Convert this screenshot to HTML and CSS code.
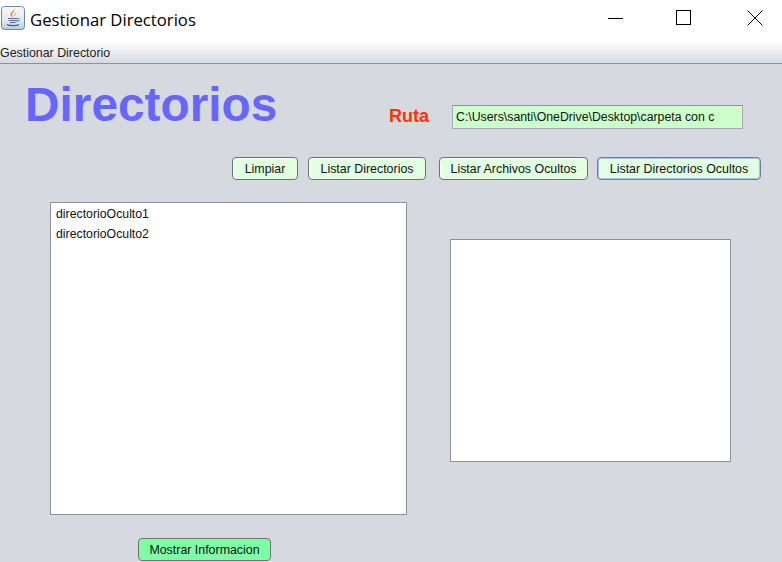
FILE: index.html
```html
<!DOCTYPE html>
<html lang="en">
<head>
    <meta charset="UTF-8">
    <meta name="viewport" content="width=device-width, initial-scale=1.0">
    <title>Gestionar Directorios</title>
    <link rel="stylesheet" href="styles.css">
</head>
<body>

    <div class="titlebar">
        <svg class="app-icon" width="24" height="24" viewBox="0 0 24 24">
            <defs>
                <linearGradient id="iconBg" x1="0" y1="0" x2="0" y2="1">
                    <stop offset="0" stop-color="#f4f6f8"/>
                    <stop offset="0.6" stop-color="#e4e9ee"/>
                    <stop offset="1" stop-color="#b9cbdc"/>
                </linearGradient>
            </defs>
            <rect x="0.500" y="0.500" width="23" height="23" rx="3" fill="url(#iconBg)" stroke="#6d8ba6"/>
            <path d="M13.500 3c1 2.500-3.500 3.500-2.500 6 .3.800.8 1.300 1 2-1.500-.6-3-2-2.400-3.600C10.200 5.800 13 5 13.500 3z" fill="#e8741a"/>
            <path d="M15 7c0 1.500-2 2-1.600 3.500-.8-1.300.2-2.600 1.600-3.500z" fill="#e8741a"/>
            <path d="M7 12.500h9.500M7.500 14.500h8.500M9 16.500h5.500" stroke="#4f6f8c" stroke-width="1.200"/>
            <path d="M16.500 12.500c2.500-.3 2.500 2.500-.8 3" fill="none" stroke="#4f6f8c"/>
            <path d="M6 18.500c2 1.500 10 1.500 12 0" fill="none" stroke="#3f6080" stroke-width="1.200"/>
        </svg>
        <span class="app-title">Gestionar Directorios</span>
        <div class="window-buttons">
            <svg width="16" height="16" viewBox="0 0 16 16"><path d="M0 8.500h15" stroke="#000"/></svg>
            <svg width="16" height="16" viewBox="0 0 16 16"><rect x="0.500" y="0.500" width="14" height="14" fill="none" stroke="#000"/></svg>
            <svg width="16" height="16" viewBox="0 0 16 16"><path d="M0.500 0.500l15 15M15.500 0.500l-15 15" stroke="#000"/></svg>
        </div>
    </div>

    <div class="menubar">Gestionar Directorio</div>

    <div class="content">
        <div class="top-row">
            <h1>Directorios</h1>
            <label class="route-label">Ruta</label>
            <input class="route-input" type="text" value="C:\Users\santi\OneDrive\Desktop\carpeta con c">
        </div>

        <div class="buttons">
            <button class="btn btn-clear">Limpiar</button>
            <button class="btn btn-dirs">Listar Directorios</button>
            <button class="btn btn-files">Listar Archivos Ocultos</button>
            <button class="btn btn-hidden focused">Listar Directorios Ocultos</button>
        </div>

        <div class="panels">
            <div class="left-col">
                <ul class="list">
                    <li>directorioOculto1</li>
                    <li>directorioOculto2</li>
                </ul>
                <button class="btn btn-show">Mostrar Informacion</button>
            </div>
            <div class="info-box"></div>
        </div>
    </div>

</body>
</html>
```

FILE: styles.css
```css
* {
    box-sizing: border-box;
}
html, body {
    margin: 0;
    height: 100%;
    overflow: hidden;
}
body {
    font-family: "Liberation Sans", Arial, sans-serif;
    background-color: #d6d9e0;
}
.titlebar {
    height: 41px;
    background-color: #fff;
    display: flex;
    align-items: flex-start;
    padding-left: 1px;
}
.app-icon {
    margin-top: 6px;
}
.app-title {
    font-family: "Open Sans", sans-serif;
    font-size: 16.7px;
    line-height: 24px;
    margin-top: 8px;
    color: #000;
    margin-left: 5px;
}
.window-buttons {
    margin-left: auto;
    margin-top: 10px;
    margin-right: 19px;
    display: flex;
    gap: 54px;
}
.window-buttons svg:first-child {
    margin-right: -2px;
}
.window-buttons svg:nth-child(2) {
    margin-right: 1px;
}
.menubar {
    height: 23px;
    padding-top: 5px;
    font-size: 12.4px;
    line-height: 14px;
    color: #222;
    background: linear-gradient(#ffffff, #f2f3f5 35%, #d6d9e0);
    border-bottom: 1px solid #8e929a;
}
.content {
    height: 498px;
}
.top-row {
    height: 93px;
    display: flex;
    align-items: flex-start;
}
h1 {
    margin: 11px 0 0 25px;
    width: 364px;
    font-size: 47.8px;
    line-height: 60px;
    font-weight: bold;
    color: #6666ff;
}
.route-label {
    margin-top: 41px;
    width: 63px;
    font-size: 18px;
    line-height: 22px;
    font-weight: bold;
    color: #ff3300;
}
.route-input {
    margin-top: 41px;
    width: 291px;
    height: 24px;
    padding: 0 3px;
    font-family: inherit;
    font-size: 12.3px;
    color: #111;
    background-color: #ccffcc;
    border: 1px solid #a6a9ae;
    border-top-color: #8e9196;
}
.buttons {
    display: flex;
    height: 45px;
    padding-left: 232px;
}
.btn {
    height: 23px;
    padding: 0;
    font-family: inherit;
    font-size: 12.4px;
    color: #111;
    background-color: #e2ffe2;
    border: 1px solid #6e7176;
    border-radius: 4px;
    box-shadow: inset 1px 1px 0 #f4fff4;
}
.btn-clear {
    width: 66px;
    margin-right: 10px;
}
.btn-dirs {
    width: 118px;
    margin-right: 13px;
}
.btn-files {
    width: 149px;
    margin-right: 9px;
}
.btn-hidden {
    width: 164px;
}
.btn.focused {
    border-color: #66829f;
    box-shadow: 0 0 0 1px #a9c2de inset;
}
.panels {
    display: flex;
    align-items: flex-start;
    padding-left: 50px;
}
.left-col {
    width: 357px;
    margin-right: 43px;
}
.list {
    list-style: none;
    margin: 0;
    padding: 1px 5px;
    height: 313px;
    font-size: 12.3px;
    color: #111;
    background-color: #fff;
    border: 1px solid #8e9196;
}
.list li {
    height: 20px;
    line-height: 20px;
}
.btn-show {
    display: block;
    width: 133px;
    margin: 23px 0 0 88px;
    background-color: #7dffa3;
    box-shadow: none;
}
.info-box {
    width: 281px;
    height: 223px;
    margin-top: 37px;
    background-color: #fff;
    border: 1px solid #8e9196;
}
```
